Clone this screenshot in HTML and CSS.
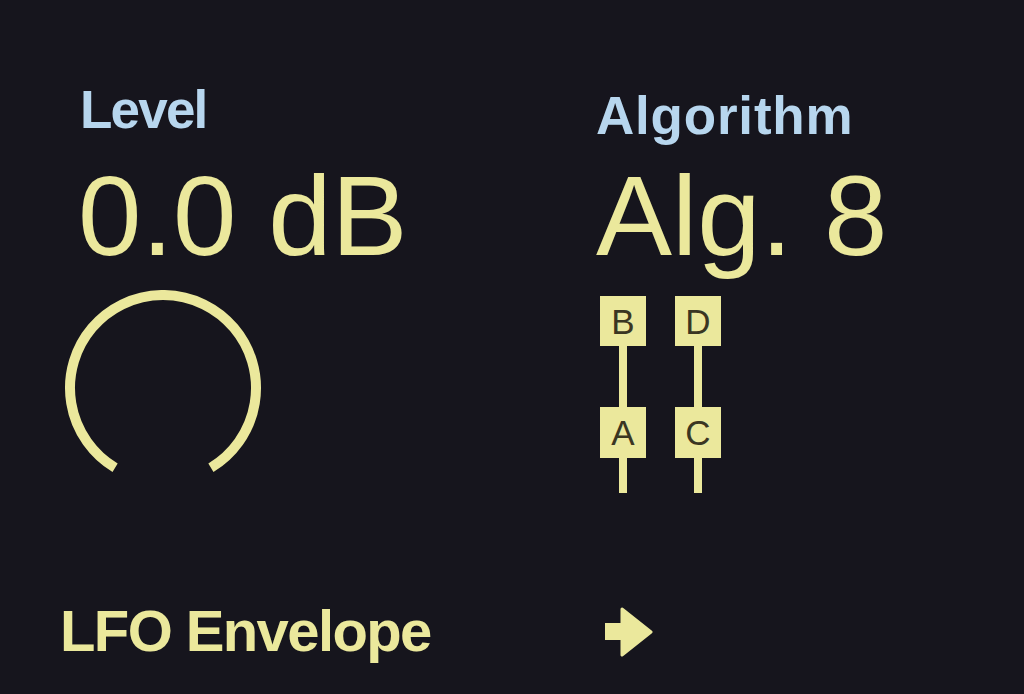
FILE: index.html
```html
<!DOCTYPE html>
<html lang="en">
<head>
<meta charset="utf-8">
<title>Operator</title>
<link rel="stylesheet" href="styles.css">
</head>
<body>
<main class="screen">
  <div class="params">
    <section class="param param-left">
      <div class="label">Level</div>
      <div class="value">0.0 dB</div>
      <svg class="knob" width="210" height="190" viewBox="0 0 210 190" aria-hidden="true">
        <path d="M 57.1 177.7 A 93 93 0 1 1 152.9 177.7" fill="none" stroke="#ebe89c" stroke-width="10"/>
      </svg>
    </section>
    <section class="param param-right">
      <div class="label">Algorithm</div>
      <div class="value">Alg. 8</div>
      <svg class="algo" width="140" height="210" viewBox="0 0 140 210" aria-hidden="true">
        <g fill="#ebe89c">
          <rect x="23" y="40" width="8" height="162"/>
          <rect x="98" y="40" width="8" height="162"/>
          <rect x="4" y="5" width="46" height="50"/>
          <rect x="79" y="5" width="46" height="50"/>
          <rect x="4" y="116" width="46" height="51"/>
          <rect x="79" y="116" width="46" height="51"/>
        </g>
        <g class="op-letter" fill="#3a3622" text-anchor="middle">
          <text x="27" y="43">B</text>
          <text x="102" y="43">D</text>
          <text x="27" y="154">A</text>
          <text x="102" y="154">C</text>
        </g>
      </svg>
    </section>
  </div>
  <div class="footer">
    <div class="nav-label">LFO Envelope</div>
    <svg class="arrow" width="50" height="54" viewBox="0 0 50 54" aria-hidden="true">
      <rect x="2" y="18" width="24" height="17" fill="#ebe89c"/>
      <path d="M 19 4 L 48 27 L 19 50 Z" fill="#ebe89c" stroke="#ebe89c" stroke-width="3" stroke-linejoin="round"/>
    </svg>
  </div>
</main>
</body>
</html>
```

FILE: styles.css
```css
html, body {
  margin: 0;
  padding: 0;
  background: #16151d;
}

.screen {
  width: 1024px;
  height: 694px;
  background: #16151d;
  display: flex;
  flex-direction: column;
  font-family: "Liberation Sans", Arial, sans-serif;
  overflow: hidden;
}

.params {
  display: flex;
  padding-top: 84px;
}

.param {
  display: flex;
  flex-direction: column;
  align-items: flex-start;
}

.param-left {
  margin-left: 78px;
  width: 518px;
}

.label {
  font-size: 53px;
  line-height: 52px;
  font-weight: 700;
  color: #b7d6ee;
  letter-spacing: 0.8px;
}

.param-left .label {
  letter-spacing: -1.8px;
  margin-left: 2px;
}

.param-right .label {
  margin-top: 6px;
  margin-bottom: -6px;
}

.value {
  margin-top: 23px;
  font-size: 114px;
  line-height: 114px;
  font-weight: 400;
  color: #ebe89c;
}

.knob {
  display: block;
  margin-top: 17px;
  margin-left: -20px;
}

.algo {
  display: block;
  margin-top: 18px;
}

.op-letter text {
  font-family: "Liberation Sans", Arial, sans-serif;
  font-size: 35px;
  font-weight: 400;
}

.footer {
  margin-top: auto;
  margin-bottom: 34px;
  display: flex;
  align-items: center;
}

.nav-label {
  margin-left: 60px;
  width: 543px;
  font-size: 58px;
  line-height: 58px;
  font-weight: 700;
  color: #ebe89c;
  letter-spacing: -1.6px;
}

.arrow {
  display: block;
  margin-top: 2px;
}
```
